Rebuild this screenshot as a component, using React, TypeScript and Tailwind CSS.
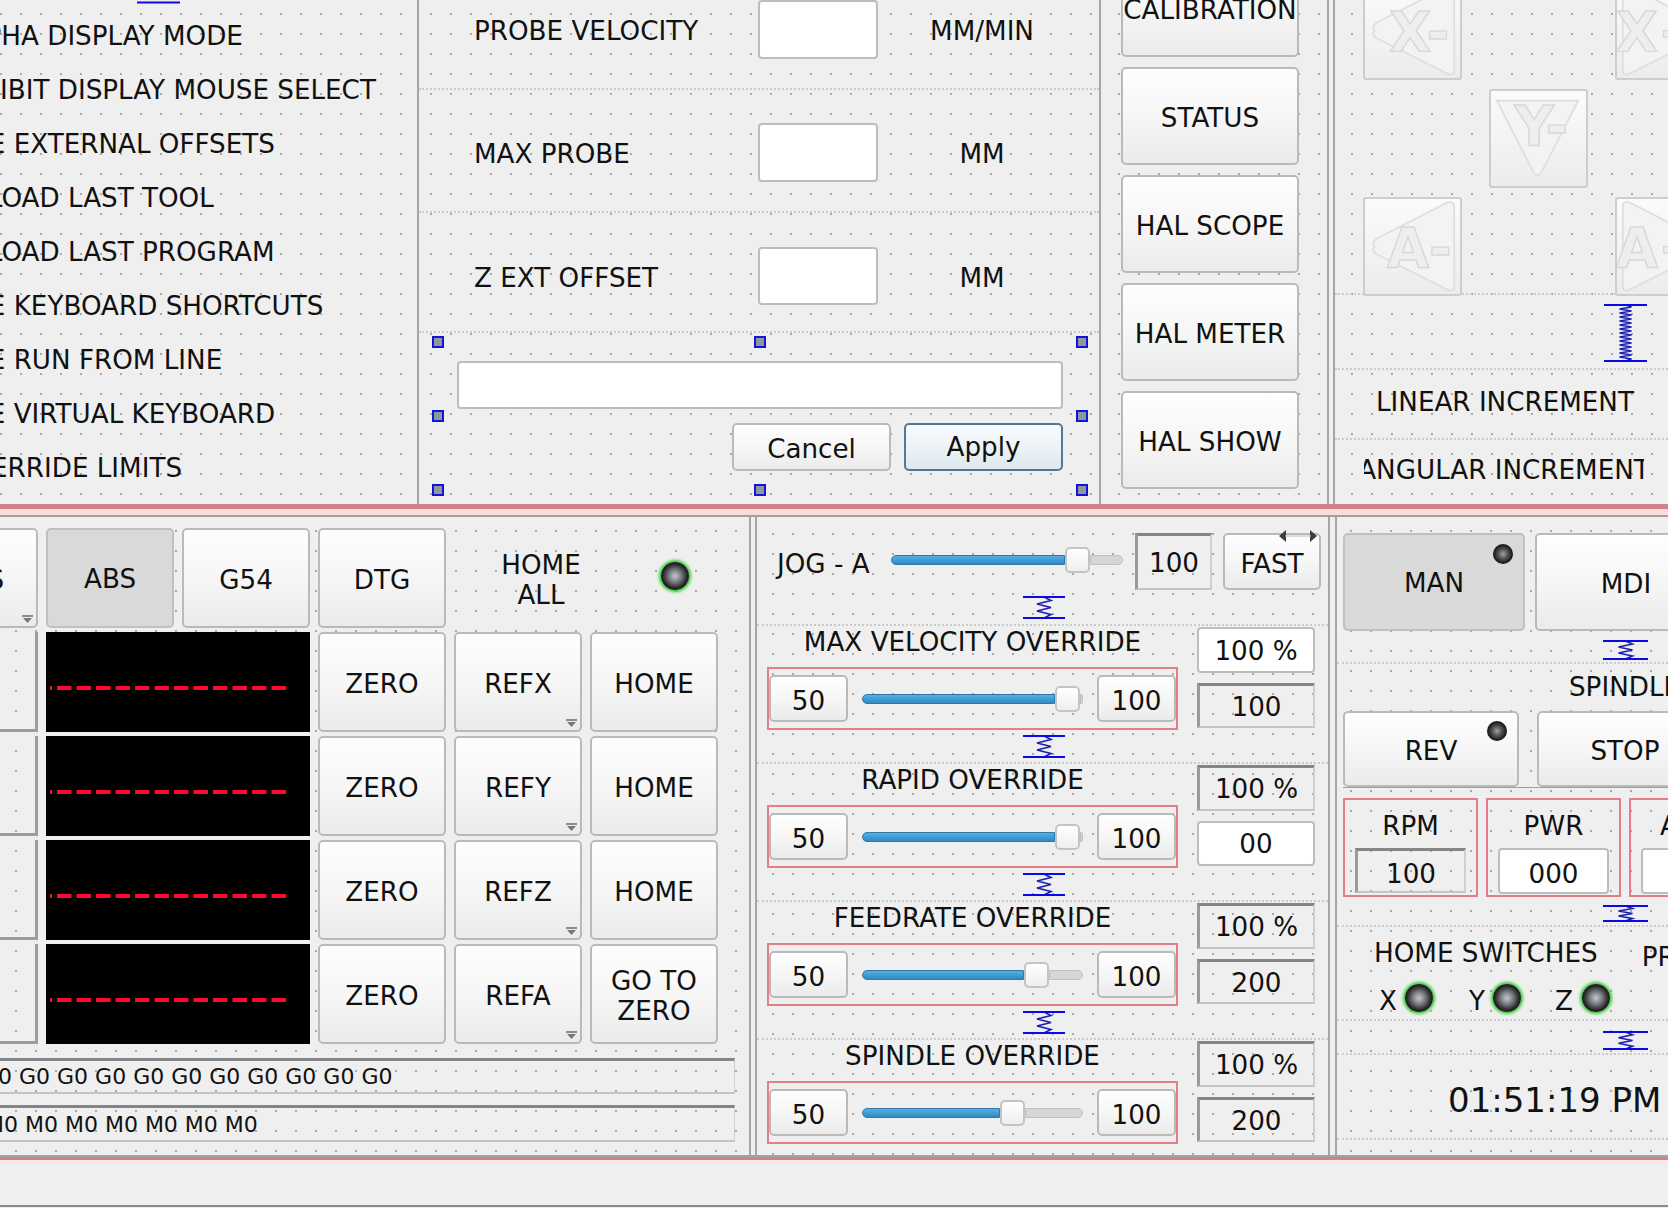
import React from "react";

const DOTS = "bg-[radial-gradient(circle,#a8a8a8_0.9px,transparent_1.3px)] bg-[length:20px_20px]";
const BTN = "relative shrink-0 flex items-center justify-center text-center pt-[4px] rounded-[5px] border-2 border-[#bababa] bg-gradient-to-b from-[#fefefe] via-[#f6f6f6] to-[#ebebeb] leading-[30px]";
const CHECKED = "relative shrink-0 flex items-center justify-center text-center pt-[4px] rounded-[5px] border-2 border-[#c0c0c0] bg-[#d9d9d9]";
const SUNKEN = "flex items-center justify-center pt-[3px] border-t-[3px] border-l-[3px] border-r-2 border-b-2 border-t-[#858585] border-l-[#9a9a9a] border-r-[#cfcfcf] border-b-[#c4c4c4]";
const FIELD = "flex items-center justify-center pt-[3px] bg-white border-2 border-[#bdbdbd] rounded-[4px]";
const DOTTED = "border-dotted border-[#cacaca]";
const RED_BOX = "border-2 border-[#e08088]";
const HANDLE = "absolute w-[12px] h-[12px] border-2 border-[#1414d8] bg-[#8c98a0]";
const DARK_LED = "absolute w-[20px] h-[20px] rounded-full bg-[radial-gradient(circle,#a4a4a4_0%,#5c5c5c_30%,#141414_68%,#050505_100%)]";

const leftLabels = [
  "ALPHA DISPLAY MODE",
  "INHIBIT DISPLAY MOUSE SELECT",
  "USE EXTERNAL OFFSETS",
  "RELOAD LAST TOOL",
  "RELOAD LAST PROGRAM",
  "USE KEYBOARD SHORTCUTS",
  "USE RUN FROM LINE",
  "USE VIRTUAL KEYBOARD",
  "OVERRIDE LIMITS",
];

function Spring({ w = 44, h = 22, coils = 3, amp = 7, className = "" }: { w?: number; h?: number; coils?: number; amp?: number; className?: string }) {
  const mid = w / 2;
  const pts: string[] = [];
  const steps = coils * 2;
  for (let i = 0; i <= steps; i++) {
    const x = i === 0 || i === steps ? mid : i % 2 ? mid + amp : mid - amp;
    pts.push(`${x},${1 + ((h - 2) * i) / steps}`);
  }
  return (
    <svg width={w} height={h} className={"block shrink-0 " + className}>
      <polyline points={pts.join(" ")} fill="none" stroke="#1a20b0" strokeWidth="1.6" />
      <line x1="0" x2={w} y1="1" y2="1" stroke="#0a0ae6" strokeWidth="2" />
      <line x1="0" x2={w} y1={h - 1} y2={h - 1} stroke="#0a0ae6" strokeWidth="2" />
    </svg>
  );
}

function MenuArrow() {
  return (
    <svg width="11" height="8" className="absolute right-[3px] bottom-[3px]">
      <rect x="0" y="0" width="11" height="2" fill="#8a8a8a" />
      <path d="M1 3 H10 L5.5 8 Z" fill="#777777" />
    </svg>
  );
}

function Led() {
  return <div className="w-[28px] h-[28px] shrink-0 rounded-full bg-[radial-gradient(circle,#c8c8d0_0%,#84848c_28%,#242424_62%,#0a0f0a_100%)] shadow-[0_0_3px_2px_#2fd02f]" />;
}

function Slider({ fill, className }: { fill: number; className: string }) {
  return (
    <div className={"flex items-center shrink-0 " + className}>
      <div className="h-[10px] rounded-l-[5px] border border-[#2f78a8] bg-gradient-to-b from-[#56aee0] to-[#2f8ac4]" style={{ width: fill }} />
      <div className="w-[25px] h-[26px] shrink-0 rounded-[5px] border-2 border-[#c4c4c4] bg-gradient-to-b from-white to-[#eeeeee]" />
      <div className="flex-1 h-[10px] rounded-r-[5px] border border-[#c0c0c0] bg-[#d6d6d6]" />
    </div>
  );
}

function JogButton({ label, dir, className = "" }: { label: string; dir: string; className?: string }) {
  const shape =
    dir === "left" ? "M10 49 Q6 45 12 41 L84 4 Q92 1 92 8 V90 Q92 97 84 93 L12 57 Q6 53 10 49 Z"
    : dir === "right" ? "M88 49 Q92 45 86 41 L14 4 Q6 1 6 8 V90 Q6 97 14 93 L86 57 Q92 53 88 49 Z"
    : "M6 10 H90 L52 84 Q48 90 44 84 Z";
  const ty = dir === "down" ? 56 : 70;
  const tx = dir === "down" ? 52 : dir === "left" ? 56 : 44;
  return (
    <div className={"w-[99px] h-[99px] rounded-[3px] border-2 border-[#cdcdcd] shrink-0 bg-gradient-to-b from-[#fbfbfb] to-[#ececec] " + className}>
      <svg width="95" height="95" viewBox="0 0 98 98" className="block">
        <path d={shape} fill="#f3f3f3" stroke="#e0e0e0" strokeWidth="2" />
        <text x={tx} y={ty} textAnchor="middle" fontFamily="DejaVu Sans" fontWeight="bold" fontSize="56" fill="#eeeeee" stroke="#d8d8d8" strokeWidth="1.5">{label}</text>
      </svg>
    </div>
  );
}

function AxisRow({ name, last }: { name: string; last?: React.ReactNode }) {
  return (
    <div className="flex gap-x-[8px] h-[100px]">
      <div className="w-[128px] shrink-0 border-r-[3px] border-b-[3px] border-[#9c9c9c]" />
      <div className="w-[264px] shrink-0 bg-black flex items-start pt-[49px] pl-[4px]">
        <svg width="244" height="14" className="block">
          <line x1="0" x2="240" y1="7" y2="7" stroke="#ff0a2a" strokeWidth="4" strokeDasharray="14.5 5" strokeDashoffset="12.5" />
        </svg>
      </div>
      <div className={BTN + " w-[128px]"}>ZERO</div>
      <div className={BTN + " w-[128px]"}>{name}<MenuArrow /></div>
      <div className={BTN + " w-[128px]"}>{last ?? "HOME"}</div>
    </div>
  );
}

function Override({ title, fill, top, bottom, firstWhite, bottomWhite, spring = true }: { title: string; fill: number; top: string; bottom: string; firstWhite?: boolean; bottomWhite?: boolean; spring?: boolean }) {
  return (
    <div className={"flex h-[138px] pl-[10px] border-t-2 " + DOTTED}>
      <div className="w-[411px] shrink-0">
        <div className="h-[41px] flex items-center justify-center pb-[8px]">{title}</div>
        <div className={"h-[63px] flex items-center " + RED_BOX}>
          <div className={BTN + " w-[79px] h-[47px]"}>50</div>
          <Slider fill={fill} className="w-[221px] ml-[14px]" />
          <div className={BTN + " w-[79px] h-[47px] ml-[14px]"}>100</div>
        </div>
        {spring && <Spring className="ml-[256px] mt-[5px]" w={42} h={23} />}
      </div>
      <div className="ml-[19px] w-[118px] shrink-0">
        <div className={(firstWhite ? FIELD : SUNKEN) + " h-[46px] mt-[1px]"}>{top}</div>
        <div className={(bottomWhite ? FIELD : SUNKEN) + " h-[45px] mt-[10px]"}>{bottom}</div>
      </div>
    </div>
  );
}

function FormRow({ label, unit, className, inputClass }: { label: string; unit: string; className: string; inputClass: string }) {
  return (
    <div className={"flex pl-[55px] border-b-2 " + DOTTED + " " + className}>
      <div className="w-[284px] shrink-0 flex items-center h-[58px] pt-[6px]">{label}</div>
      <div className={FIELD + " w-[120px] " + inputClass} />
      <div className="w-[208px] flex items-center justify-center h-[58px] pt-[6px]">{unit}</div>
    </div>
  );
}

export default function App() {
  return (
    <div className="w-[1668px] h-[1208px] overflow-hidden flex flex-col bg-[#efefef] text-[#111111] text-[26.2px] font-['DejaVu_Sans',sans-serif]">
      {/* top half */}
      <div className="h-[504px] flex shrink-0 overflow-hidden">
        <div className={"relative w-[419px] shrink-0 border-r-2 border-[#a6a6a6] pt-[10px] overflow-hidden bg-[position:11px_4px] " + DOTS}>
          <svg width="43" height="4" className="absolute left-[137px] top-0">
            <line x1="0" x2="43" y1="2.5" y2="2.5" stroke="#0a0ae6" strokeWidth="2" />
          </svg>
          {leftLabels.map((l) => (
            <div key={l} className="h-[54px] -ml-[47px] flex items-center whitespace-nowrap">{l}</div>
          ))}
        </div>

        <div className={"relative w-[680px] shrink-0 bg-[position:2px_4px] " + DOTS}>
          <FormRow label="PROBE VELOCITY" unit="MM/MIN" className="h-[90px]" inputClass="h-[59px]" />
          <FormRow label="MAX PROBE" unit="MM" className="h-[123px] pt-[33px]" inputClass="h-[59px]" />
          <FormRow label="Z EXT OFFSET" unit="MM" className="h-[120px] pt-[34px]" inputClass="h-[58px]" />
          <div className={FIELD + " mt-[28px] ml-[38px] w-[606px] h-[48px]"} />
          <div className="flex justify-end gap-x-[13px] mt-[14px] mr-[36px]">
            <div className={BTN + " w-[159px] h-[48px]"}>Cancel</div>
            <div className="flex items-center justify-center w-[159px] h-[48px] pt-[2px] rounded-[5px] border-2 border-[#4f7a9a] bg-gradient-to-b from-[#fafcfd] to-[#dfe8ef]">Apply</div>
          </div>
          <div className={HANDLE + " left-[13px] top-[336px]"} />
          <div className={HANDLE + " left-[335px] top-[336px]"} />
          <div className={HANDLE + " left-[657px] top-[336px]"} />
          <div className={HANDLE + " left-[13px] top-[410px]"} />
          <div className={HANDLE + " left-[657px] top-[410px]"} />
          <div className={HANDLE + " left-[13px] top-[484px]"} />
          <div className={HANDLE + " left-[335px] top-[484px]"} />
          <div className={HANDLE + " left-[657px] top-[484px]"} />
        </div>

        <div className={"w-[230px] shrink-0 border-l-2 border-r-2 border-[#a6a6a6] pl-[20px] flex flex-col bg-[position:8px_4px] " + DOTS}>
          <div className="flex flex-col gap-y-[10px] -mt-[41px]">
            {["CALIBRATION", "STATUS", "HAL SCOPE", "HAL METER", "HAL SHOW"].map((b) => (
              <div key={b} className={BTN + " w-[178px] h-[98px] whitespace-nowrap"}>{b}</div>
            ))}
          </div>
        </div>

        <div className="w-[6px] shrink-0 border-r-2 border-[#a6a6a6]" />

        <div className={"flex-1 min-w-0 overflow-hidden bg-[position:7px_4px] " + DOTS}>
          <div className={"h-[295px] flex flex-col border-b-2 " + DOTTED}>
            <div className="flex -mt-[19px] ml-[28px] gap-x-[153px]">
              <JogButton label="X-" dir="left" />
              <JogButton label="X+" dir="right" />
            </div>
            <div className="flex mt-[9px] ml-[154px]">
              <JogButton label="Y-" dir="down" />
            </div>
            <div className="flex mt-[9px] ml-[28px] gap-x-[153px]">
              <JogButton label="A-" dir="left" />
              <JogButton label="A+" dir="right" />
            </div>
          </div>
          <div className={"h-[75px] pt-[9px] pl-[269px] border-b-2 " + DOTTED}>
            <Spring w={43} h={58} coils={14} amp={6} />
          </div>
          <div className={"h-[70px] flex items-center pl-[41px] pb-[2px] whitespace-nowrap border-b-2 " + DOTTED}>LINEAR INCREMENT</div>
          <div className="h-[60px] flex items-center pt-[1px]">
            <div className="ml-[29px] w-[280px] overflow-hidden flex justify-center whitespace-nowrap">ANGULAR INCREMENT</div>
          </div>
        </div>
      </div>

      {/* divider */}
      <div className="h-[5px] shrink-0 bg-[#d1818a]" />
      <div className="h-[6px] shrink-0 bg-[#fbdcdc]" />
      <div className="h-[2px] shrink-0 bg-[#a89c98]" />

      {/* bottom half */}
      <div className="h-[640px] shrink-0 flex border-b-2 border-[#a2a2a2] overflow-hidden">
        <div className={"w-[751px] shrink-0 border-r-2 border-[#a6a6a6] overflow-hidden pt-[11px] bg-[position:6px_4px] " + DOTS}>
          <div className="-ml-[90px] w-[900px]">
            <div className="flex gap-x-[8px] h-[100px]">
              <div className={BTN + " w-[128px]"}>AXIS<MenuArrow /></div>
              <div className={CHECKED + " w-[128px]"}>ABS</div>
              <div className={BTN + " w-[128px]"}>G54</div>
              <div className={BTN + " w-[128px]"}>DTG</div>
              <div className="w-[174px] shrink-0 flex items-center justify-center text-center leading-[30px] pt-[3px]">HOME<br />ALL</div>
              <div className="ml-[25px] -mt-[4px] flex items-center"><Led /></div>
            </div>
            <div className="flex flex-col gap-y-[4px] mt-[4px]">
              <AxisRow name="REFX" />
              <AxisRow name="REFY" />
              <AxisRow name="REFZ" />
              <AxisRow name="REFA" last={<>GO TO<br />ZERO</>} />
            </div>
          </div>
          <div className="h-[36px] mt-[14px] w-[735px] overflow-hidden flex items-center whitespace-nowrap text-[22px] border-t-[3px] border-t-[#858585] border-b-2 border-b-[#c4c4c4] border-r border-r-[#cfcfcf]">
            <span className="-ml-[19px]">G0 G0 G0 G0 G0 G0 G0 G0 G0 G0 G0</span>
          </div>
          <div className="h-[37px] mt-[11px] w-[735px] overflow-hidden flex items-center whitespace-nowrap text-[22px] border-t-[3px] border-t-[#858585] border-b-2 border-b-[#c4c4c4] border-r border-r-[#cfcfcf]">
            <span className="-ml-[15px]">M0 M0 M0 M0 M0 M0 M0</span>
          </div>
        </div>

        <div className="w-[4px] shrink-0" />

        <div className={"w-[575px] shrink-0 border-l-2 border-r-2 border-[#a6a6a6] pt-[16px] bg-[position:6px_7px] " + DOTS}>
          <div className="flex items-center h-[57px] pl-[20px]">
            <div className="w-[114px] shrink-0 whitespace-nowrap pt-[6px]">JOG - A</div>
            <Slider fill={174} className="w-[232px] -mt-[4px]" />
            <div className={SUNKEN + " w-[77px] h-[57px] ml-[12px]"}>100</div>
            <div className={BTN + " w-[98px] h-[57px] ml-[11px]"}>
              FAST
              <svg width="38" height="12" className="absolute right-[2px] -top-[5px]">
                <path d="M0 6 L7 0 V12 Z M38 6 L31 0 V12 Z" fill="#3c3c3c" />
                <line x1="6" x2="32" y1="6" y2="6" stroke="#b8b8b8" strokeWidth="1" />
              </svg>
            </div>
          </div>
          <div className="h-[34px] pt-[6px] pl-[266px]">
            <Spring w={42} h={23} />
          </div>
          <Override title="MAX VELOCITY OVERRIDE" fill={193} top="100 %" bottom="100" firstWhite />
          <Override title="RAPID OVERRIDE" fill={193} top="100 %" bottom="00" bottomWhite />
          <Override title="FEEDRATE OVERRIDE" fill={162} top="100 %" bottom="200" />
          <Override title="SPINDLE OVERRIDE" fill={138} top="100 %" bottom="200" spring={false} />
        </div>

        <div className="w-[5px] shrink-0" />

        <div className={"w-[333px] shrink-0 border-l-2 border-[#a6a6a6] overflow-hidden pt-[16px] bg-[position:4px_4px] " + DOTS}>
          <div className="flex ml-[6px] gap-x-[10px] h-[98px]">
            <div className={CHECKED + " w-[182px]"}>
              MAN
              <div className={DARK_LED + " right-[10px] top-[9px]"} />
            </div>
            <div className={BTN + " w-[182px]"}>MDI</div>
          </div>
          <div className={"h-[33px] pt-[9px] pl-[266px] border-b-2 " + DOTTED}>
            <Spring w={45} h={20} />
          </div>
          <div className="h-[47px] flex items-center pl-[232px] whitespace-nowrap">SPINDLE</div>
          <div className="flex ml-[6px] gap-x-[18px] h-[77px] border-b border-[#e08088] w-[326px]">
            <div className={BTN + " w-[176px]"}>
              REV
              <div className={DARK_LED + " right-[10px] top-[8px]"} />
            </div>
            <div className={BTN + " w-[176px]"}>STOP</div>
          </div>
          <div className="flex ml-[6px] gap-x-[8px] mt-[10px] h-[99px]">
            <div className={RED_BOX + " w-[135px] shrink-0"}>
              <div className="h-[48px] flex items-center justify-center pt-[5px]">RPM</div>
              <div className={SUNKEN + " h-[45px] mx-[10px] pt-[7px]"}>100</div>
            </div>
            <div className={RED_BOX + " w-[135px] shrink-0"}>
              <div className="h-[48px] flex items-center justify-center pt-[5px]">PWR</div>
              <div className={FIELD + " h-[46px] mx-[10px] pt-[7px]"}>000</div>
            </div>
            <div className={RED_BOX + " w-[135px] shrink-0"}>
              <div className="h-[48px] flex items-center justify-center pt-[5px]">AMPS</div>
              <div className={FIELD + " h-[46px] mx-[10px]"}>000</div>
            </div>
          </div>
          <div className={"h-[30px] pt-[8px] pl-[266px] border-b-2 " + DOTTED}>
            <Spring w={45} h={17} />
          </div>
          <div className={"h-[94px] border-b-2 " + DOTTED}>
            <div className="h-[50px] flex items-center pl-[37px] pt-[4px] whitespace-nowrap">
              <span>HOME SWITCHES</span>
              <span className="ml-[44px] mt-[8px]">PROBE</span>
            </div>
            <div className="flex items-center h-[36px] pl-[42px] mt-[3px]">
              <span className="w-[26px] pt-[7px]">X</span><Led />
              <span className="ml-[36px] w-[24px] pt-[7px]">Y</span><Led />
              <span className="ml-[34px] w-[27px] pt-[7px]">Z</span><Led />
            </div>
          </div>
          <div className={"h-[34px] pt-[10px] pl-[266px] border-b-2 " + DOTTED}>
            <Spring w={45} h={19} />
          </div>
          <div className={"h-[85px] flex items-center pl-[111px] pt-[8px] text-[34px] whitespace-nowrap border-b-2 " + DOTTED}>01:51:19 PM</div>
        </div>
      </div>

      {/* status bar */}
      <div className="h-[3px] shrink-0 bg-[#d1818a]" />
      <div className="h-[3px] shrink-0 bg-[#f8e8e4]" />
      <div className="h-[44px] shrink-0 border-b-2 border-[#8a8a8a]" />
    </div>
  );
}
